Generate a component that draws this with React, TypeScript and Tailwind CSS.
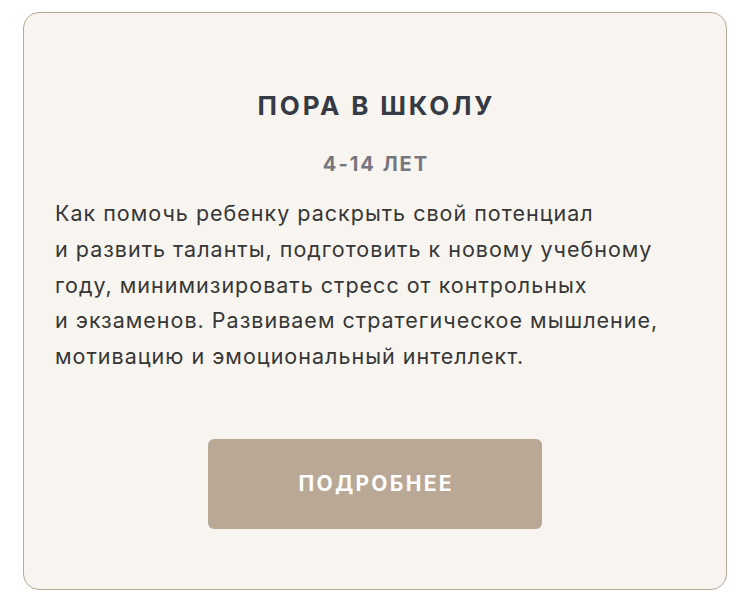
import React from "react";

export default function App() {
  const lines = [
    "Как помочь ребенку раскрыть свой потенциал",
    "и развить таланты, подготовить к новому учебному",
    "году, минимизировать стресс от контрольных",
    "и экзаменов. Развиваем стратегическое мышление,",
    "мотивацию и эмоциональный интеллект.",
  ];
  return (
    <div className="w-[738px] h-[603px] bg-white pt-[12px] pl-[23px]" style={{ fontFamily: "Inter, 'Noto Sans', sans-serif" }}>
      <div className="w-[704px] h-[578px] rounded-[16px] border border-[#b9a995] bg-[#f8f5f0] flex flex-col items-center">
        <h2 className="mt-[77px] text-[26px] leading-[32px] font-bold text-[#353a44] tracking-[2.8px] pl-[2.8px]">ПОРА В ШКОЛУ</h2>
        <div className="mt-[29px] text-[20px] leading-[26px] font-bold text-[#76767e] tracking-[2px] pl-[2px]">4-14 ЛЕТ</div>
        <div className="mt-[19px] self-stretch pl-[31px] text-[21.5px] leading-[35.75px] text-[#363636] tracking-[1px]">
          {lines.map((l, i) => (
            <div key={i}>{l}</div>
          ))}
        </div>
        <button className="mt-[64px] w-[334px] h-[90px] rounded-[6px] bg-[#b8a895] text-white text-[21px] font-bold tracking-[2.3px] pl-[2.3px]">
          ПОДРОБНЕЕ
        </button>
      </div>
    </div>
  );
}
